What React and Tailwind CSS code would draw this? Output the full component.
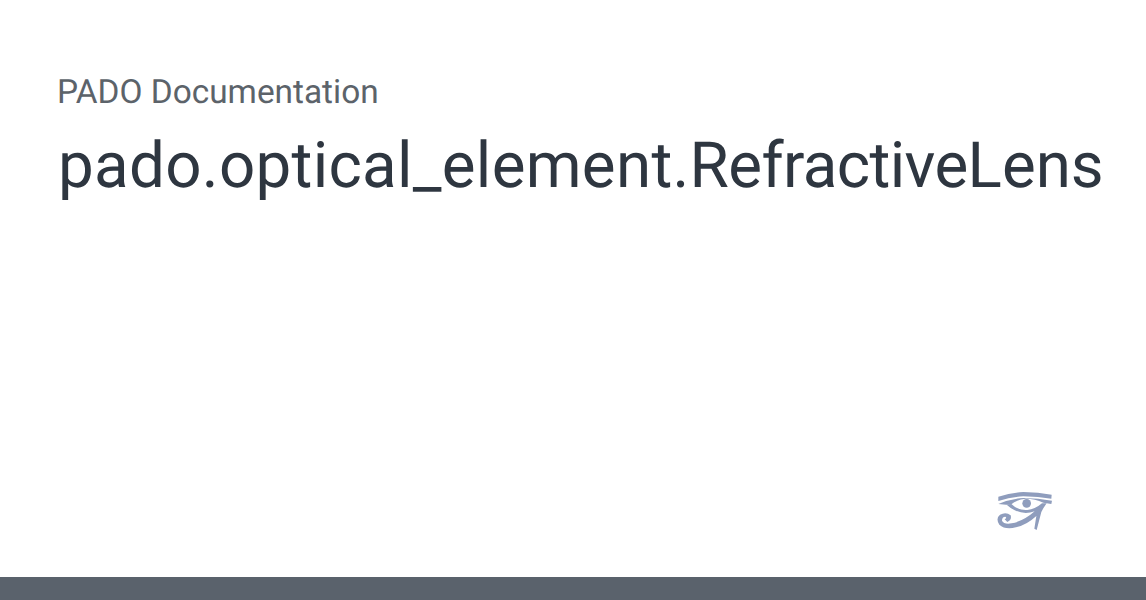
export default function App() {
  return (
    <div className="h-[600px] w-full flex flex-col bg-white [text-rendering:geometricPrecision]" style={{ fontFamily: "Roboto, sans-serif" }}>
      <div className="flex-1 flex flex-col pl-[57px] pt-[71px] pb-[45px]">
        <div className="text-[33.4px] leading-[44px] text-[#5c636a]">PADO Documentation</div>
        <div className="text-[63.7px] leading-[80px] mt-[11px] ml-[1px] text-[#2e3640] whitespace-nowrap">
          <span className="tracking-[0.29px]">pado.optical_element.</span><span className="tracking-[-0.6px]">Refractive</span><span>Lens</span>
        </div>
        <div className="mt-auto flex justify-end pr-[89px]">
          <svg width="61" height="42" viewBox="48 30 183 126" fill="none">
            <path d="M55 50 Q95 38 130 36 Q175 37 215 44 L214 56 Q175 50 130 49 Q95 51 55 63Z" fill="#8f9dbd" />
            <path d="M55 72 Q95 56 130 54 Q175 54 216 62 L214 72 L190 68 Q165 56 138 56 Q112 58 92 74 L78 74Z" fill="#8f9dbd" />
            <circle cx="140" cy="70" r="13" fill="#8f9dbd" />
            <path d="M80 74 L94 72 Q115 92 142 90 Q165 88 186 70 L200 70 L190 85 L184 96 L170 150 L163 146 L169 108 Q140 135 108 142 Q75 150 58 134 Q46 115 60 104 Q78 94 92 106 Q96 120 82 126 L74 118 Q82 114 76 110 Q66 110 66 122 Q72 134 95 130 Q130 124 164 94 Q120 110 80 74Z" fill="#8f9dbd" />
          </svg>
        </div>
      </div>
      <div className="h-[23px] bg-[#5a626c]" />
    </div>
  );
}
